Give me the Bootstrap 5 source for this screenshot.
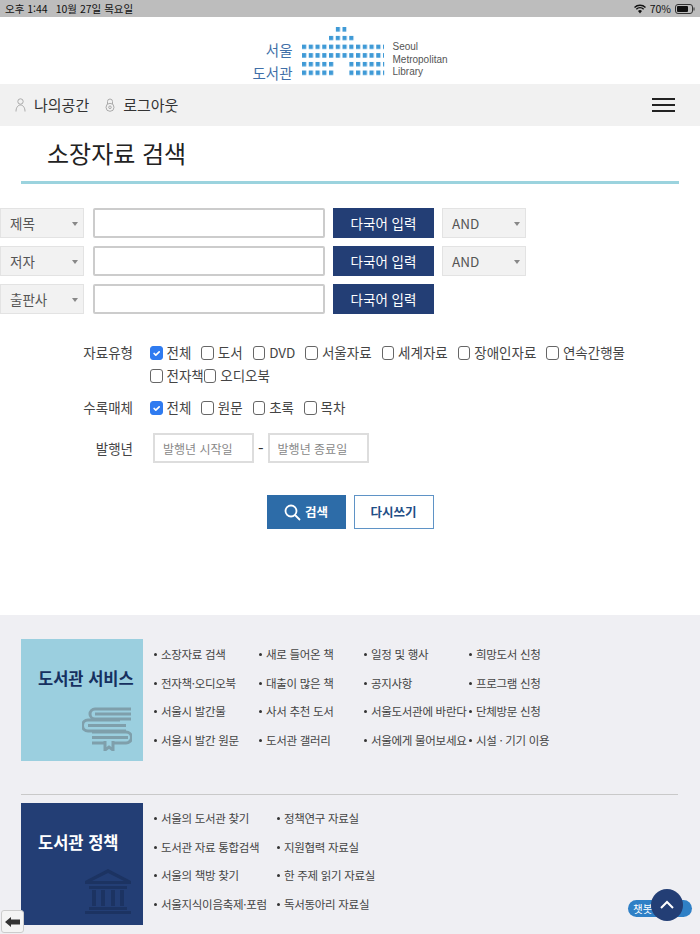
<!DOCTYPE html>
<html lang="ko">
<head>
<meta charset="UTF-8">
<meta name="viewport" content="width=device-width, initial-scale=1.0">
<title>소장자료 검색</title>
<link href="https://cdn.jsdelivr.net/npm/bootstrap@5.3.0/dist/css/bootstrap.min.css" rel="stylesheet">
<style>
body { font-family: "Noto Sans CJK KR", "Noto Sans", sans-serif; color: #333; background: #fff; }
.page-wrap { position: relative; width: 700px; height: 934px; overflow: hidden; }
.status-bar { height: 17px; background: #bdbdbd; font-size: 10.5px; color: #111; padding: 0 5px; }
.logo-head { height: 67px; }
.logo-ko { font-size: 14.5px; line-height: 23px; color: #3f6fa8; text-align: right; margin-top: 21px; }
.logo-en { font-family: "Liberation Sans", sans-serif; font-size: 10px; line-height: 12.5px; color: #555; margin-top: 24px; }
.util-bar { height: 42px; background: #f1f1f1; padding: 0 25px 0 15px; font-size: 15px; color: #333; }
.burger { width: 23px; height: 14px; border-top: 2px solid #222; border-bottom: 2px solid #222; position: relative; }
.burger::after { content: ""; position: absolute; left: 0; right: 0; top: 4px; height: 2px; background: #222; }
.page-title { font-size: 24px; font-weight: 400; line-height: 34px; color: #222; margin: 0 21px; padding: 10px 0 10px 26px; border-bottom: 3px solid #9bd3de; height: 58px; }
.search-rows { margin-top: 24px; }
.term-row { height: 30px; margin-bottom: 8px; }
.fake-sel { height: 30px; background: #f2f2f2; border: 1px solid #e3e3e3; font-size: 13.5px; color: #555; padding: 0 9px; position: relative; border-radius: 0; }
.fake-sel::after { content: ""; position: absolute; right: 5px; top: 13px; border-left: 3.5px solid transparent; border-right: 3.5px solid transparent; border-top: 4px solid #888; }
.sel-field { width: 84px; }
.sel-op { width: 84px; margin-left: 8px; }
.term-input { width: 232px; height: 30px; margin: 0 8px 0 9px; border: 2px solid #ccc; border-radius: 2px; }
.lang-btn { width: 101px; height: 30px; padding: 0; background: #233e75; border: 0; border-radius: 0; color: #fff; font-size: 13.5px; }
.opt-row { display: flex; }
.opt-label { width: 133px; text-align: right; font-size: 13.5px; color: #444; line-height: 20px; flex: none; }
.opt-list { margin-left: 17px; width: 530px; display: flex; flex-wrap: wrap; row-gap: 3px; font-size: 13.5px; line-height: 20px; color: #444; }
.opt-item { display: flex; align-items: center; margin-right: 10px; }
.opt-item .form-check-input { width: 12.5px; height: 14px; margin: 2px 4px 0 0; border: 1px solid #666; border-radius: 3px; }
.opt-item .form-check-input:checked { border-color: #2f7bf0; background-color: #2f7bf0; }
.year-input { width: 101px; height: 30px; border: 2px solid #ddd; border-radius: 0; font-size: 12px; padding: 0 8px; }
.year-input::placeholder { color: #888; }
.search-btn { width: 79px; height: 34px; padding: 0; background: #2d6ca8; border: 0; border-radius: 0; color: #fff; font-size: 12.5px; font-weight: 700; }
.reset-btn { width: 80px; height: 34px; padding: 0; background: #fff; border: 1px solid #5f93c6; border-radius: 0; color: #1f4e86; font-size: 12.5px; font-weight: 700; }
.foot-area { position: absolute; left: 0; right: 0; top: 615px; bottom: 0; background: #efeff3; padding: 24px 22px 0 21px; }
.foot-group { height: 122px; }
.foot-card { width: 122px; height: 122px; flex: none; position: relative; padding: 28px 0 0 17px; font-size: 16.5px; font-weight: 700; line-height: 22px; }
.card-teal { background: #9bcfdf; color: #16305f; }
.card-navy { background: #233e75; color: #fff; }
.foot-card svg { position: absolute; right: 11px; bottom: 10px; }
.foot-links { margin: 0 0 0 11px; padding: 0; list-style: none; display: grid; grid-auto-flow: column; grid-template-rows: repeat(4, 28.6px); font-size: 11.5px; letter-spacing: -.3px; color: #444; line-height: 28.6px; }
.foot-links li { white-space: nowrap; padding-left: 7px; position: relative; }
.foot-links li::before { content: ""; position: absolute; left: 0; top: 13px; width: 3px; height: 3px; border-radius: 50%; background: #333; }
.cols-a { grid-template-columns: repeat(4, 105px); margin-top: 1px; }
.cols-b { grid-template-columns: 123px 123px; margin-top: 1px; }
.foot-line { border-top: 1px solid #c9c9c9; margin: 33px 0 8px; }
.back-btn { position: absolute; left: 1px; top: 910px; width: 23px; height: 23px; background: #f4f4f4; border: 1px solid #ccc; border-radius: 3px; }
.chat-pill { position: absolute; left: 628px; top: 900px; width: 64px; height: 17px; background: #2f80c6; border-radius: 9px; color: #fff; font-size: 10.5px; line-height: 17px; padding-left: 5px; }
.top-btn { position: absolute; left: 651px; top: 889px; width: 32px; height: 32px; background: #233e75; border-radius: 50%; }
</style>
</head>
<body>
<div class="page-wrap">
  <div class="status-bar d-flex justify-content-between align-items-center">
    <div class="d-flex gap-2"><span>오후 1:44</span><span>10월 27일 목요일</span></div>
    <div class="d-flex align-items-center gap-1">
      <svg width="12" height="10" viewBox="0 0 12 10"><path d="M0.5 3.5a8 8 0 0 1 11 0M2.3 5.3a5.4 5.4 0 0 1 7.4 0" fill="none" stroke="#111" stroke-width="1.5"/><path d="M4 7a2.8 2.8 0 0 1 4 0L6 9.4z" fill="#111"/></svg>
      <span>70%</span>
      <svg width="20" height="10" viewBox="0 0 20 10"><rect x=".5" y=".5" width="17" height="9" rx="2.5" fill="none" stroke="#333"/><rect x="2" y="2" width="11" height="6" rx="1" fill="#111"/><rect x="18.5" y="3.5" width="1" height="3" fill="#333"/></svg>
    </div>
  </div>

  <header class="logo-head d-flex justify-content-center">
    <div class="logo-ko">서울<br>도서관</div>
    <svg class="mx-1" width="92" height="67" viewBox="0 0 92 67">
      <defs><pattern id="dots" x="5" y="10" width="6.75" height="8.7" patternUnits="userSpaceOnUse"><rect width="4.2" height="4.6" fill="#3f9ad6"/></pattern></defs>
      <rect x="38.5" y="10" width="11" height="5" fill="url(#dots)"/>
      <rect x="32" y="18.7" width="27" height="5" fill="url(#dots)"/>
      <rect x="5" y="27.4" width="82" height="14" fill="url(#dots)"/>
      <rect x="5" y="44.8" width="32" height="14" fill="url(#dots)"/>
      <rect x="52.2" y="44.8" width="35" height="14" fill="url(#dots)"/>
    </svg>
    <div class="logo-en">Seoul<br>Metropolitan<br>Library</div>
  </header>

  <div class="util-bar d-flex justify-content-between align-items-center">
    <div class="d-flex align-items-center">
      <svg class="me-2" width="11" height="14" viewBox="0 0 11 14" fill="none" stroke="#aaa"><circle cx="5.5" cy="3.5" r="2.7"/><path d="M1 13.5c0-4 2-6.500 4.500-6.500S10 9.500 10 13.500"/></svg>
      <span>나의공간</span>
      <svg class="ms-3 me-2" width="10" height="14" viewBox="0 0 10 14" fill="none" stroke="#aaa"><path d="M2.500 6V3.500a2.500 2.500 0 0 1 5 0V6"/><circle cx="5" cy="9.300" r="4"/><circle cx="5" cy="9.300" r="1.300"/></svg>
      <span>로그아웃</span>
    </div>
    <div class="burger"></div>
  </div>

  <h2 class="page-title">소장자료 검색</h2>

  <div class="search-rows">
    <div class="term-row d-flex">
      <div class="fake-sel sel-field d-flex align-items-center">제목</div>
      <input type="text" class="form-control term-input">
      <button class="btn lang-btn">다국어 입력</button>
      <div class="fake-sel sel-op d-flex align-items-center">AND</div>
    </div>
    <div class="term-row d-flex">
      <div class="fake-sel sel-field d-flex align-items-center">저자</div>
      <input type="text" class="form-control term-input">
      <button class="btn lang-btn">다국어 입력</button>
      <div class="fake-sel sel-op d-flex align-items-center">AND</div>
    </div>
    <div class="term-row d-flex">
      <div class="fake-sel sel-field d-flex align-items-center">출판사</div>
      <input type="text" class="form-control term-input">
      <button class="btn lang-btn">다국어 입력</button>
    </div>
  </div>

  <div class="opt-row mt-4 pt-1">
    <div class="opt-label">자료유형</div>
    <div class="opt-list">
      <label class="opt-item"><input class="form-check-input" type="checkbox" checked>전체</label>
      <label class="opt-item"><input class="form-check-input" type="checkbox">도서</label>
      <label class="opt-item"><input class="form-check-input" type="checkbox">DVD</label>
      <label class="opt-item"><input class="form-check-input" type="checkbox">서울자료</label>
      <label class="opt-item"><input class="form-check-input" type="checkbox">세계자료</label>
      <label class="opt-item"><input class="form-check-input" type="checkbox">장애인자료</label>
      <label class="opt-item"><input class="form-check-input" type="checkbox">연속간행물</label>
      <label class="opt-item me-0"><input class="form-check-input" type="checkbox">전자책</label>
      <label class="opt-item"><input class="form-check-input" type="checkbox">오디오북</label>
    </div>
  </div>
  <div class="opt-row mt-2 pt-1">
    <div class="opt-label">수록매체</div>
    <div class="opt-list">
      <label class="opt-item"><input class="form-check-input" type="checkbox" checked>전체</label>
      <label class="opt-item"><input class="form-check-input" type="checkbox">원문</label>
      <label class="opt-item"><input class="form-check-input" type="checkbox">초록</label>
      <label class="opt-item"><input class="form-check-input" type="checkbox">목차</label>
    </div>
  </div>
  <div class="opt-row align-items-center mt-3">
    <div class="opt-label">발행년</div>
    <div class="d-flex align-items-center ms-3 ps-1 gap-1">
      <input type="text" class="form-control year-input" placeholder="발행년 시작일">
      <span>-</span>
      <input type="text" class="form-control year-input" placeholder="발행년 종료일">
    </div>
  </div>

  <div class="d-flex justify-content-center gap-2 mt-4 pt-2">
    <button class="btn search-btn d-flex align-items-center justify-content-center gap-1">
      <svg width="17" height="17" viewBox="0 0 17 17" fill="none" stroke="#fff" stroke-width="1.800"><circle cx="7" cy="7" r="5.500"/><path d="M11 11l5 5"/></svg>
      검색
    </button>
    <button class="btn reset-btn">다시쓰기</button>
  </div>

  <footer class="foot-area">
    <div class="foot-group d-flex">
      <div class="foot-card card-teal">도서관 서비스
        <svg width="50" height="44" viewBox="0 0 50 44" fill="none" stroke="#7f9fab" stroke-width="3"><path d="M49 2H13a5 5 0 0 0 0 10h36M13 7h36"/><path d="M38 13H6a5.500 5.500 0 0 0 0 11h38"/><path d="M6 18.500h38"/><path d="M10 25h34a5.500 5.500 0 0 1 0 11H30M10 30.500h36M10 36h13"/><path d="M23 34v9l4-3 4 3v-9"/></svg>
      </div>
      <ul class="foot-links cols-a">
        <li>소장자료 검색</li><li>전자책·오디오북</li><li>서울시 발간물</li><li>서울시 발간 원문</li>
        <li>새로 들어온 책</li><li>대출이 많은 책</li><li>사서 추천 도서</li><li>도서관 갤러리</li>
        <li>일정 및 행사</li><li>공지사항</li><li>서울도서관에 바란다</li><li>서울에게 물어보세요</li>
        <li>희망도서 신청</li><li>프로그램 신청</li><li>단체방문 신청</li><li>시설 · 기기 이용</li>
      </ul>
    </div>
    <div class="foot-line"></div>
    <div class="foot-group d-flex">
      <div class="foot-card card-navy">도서관 정책
        <svg width="48" height="46" viewBox="0 0 48 46" fill="#1c3362"><path d="M24 0L47 12v3H1v-3zM24 4L8 12h32z" fill-rule="evenodd"/><path d="M5 17h38v3H5zM8 21h4v16H8zM17 21h4v16h-4zM27 21h4v16h-4zM36 21h4v16h-4zM5 38h38v3H5zM1 42h46v3H1z"/></svg>
      </div>
      <ul class="foot-links cols-b">
        <li>서울의 도서관 찾기</li><li>도서관 자료 통합검색</li><li>서울의 책방 찾기</li><li>서울지식이음축제·포럼</li>
        <li>정책연구 자료실</li><li>지원협력 자료실</li><li>한 주제 읽기 자료실</li><li>독서동아리 자료실</li>
      </ul>
    </div>
  </footer>

  <div class="back-btn d-flex align-items-center justify-content-center">
    <svg width="15" height="10" viewBox="0 0 15 10"><path d="M0 5l6-5v2.500h9v5H6V10z" fill="#333"/></svg>
  </div>
  <div class="chat-pill">챗봇</div>
  <div class="top-btn d-flex align-items-center justify-content-center">
    <svg width="16" height="10" viewBox="0 0 16 10" fill="none" stroke="#fff" stroke-width="2"><path d="M2 8l6-6 6 6"/></svg>
  </div>
</div>
<script src="https://cdn.jsdelivr.net/npm/bootstrap@5.3.0/dist/js/bootstrap.bundle.min.js"></script>
</body>
</html>
